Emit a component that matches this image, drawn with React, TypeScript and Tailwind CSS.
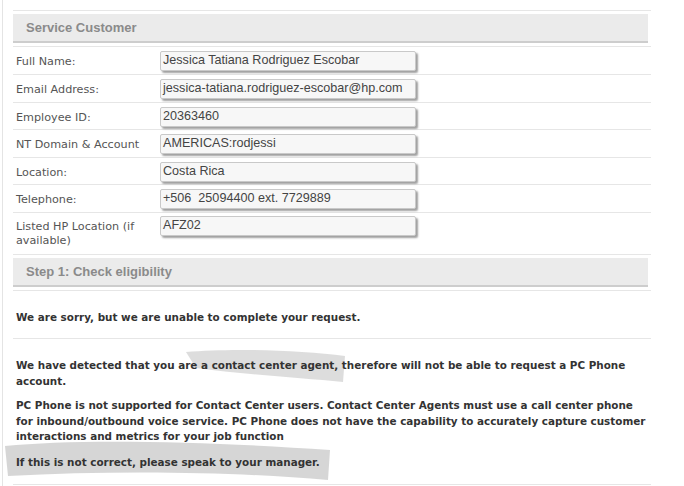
import React from 'react';

const LABEL = "font-['DejaVu_Sans',Verdana,sans-serif] text-[11.2px] text-[#555]";
const INPUT =
  "w-[256px] h-[20px] rounded-[2px] border border-[#c9c9c9] bg-[#f7f7f7] px-[2px] leading-[16px] whitespace-pre text-[12.6px] text-[#444] font-['Liberation_Sans',Arial,sans-serif] shadow-[2px_2px_2px_#a0a0a0]";

const fields = [
  { label: 'Full Name:', value: 'Jessica Tatiana Rodriguez Escobar', h: 'h-[28px]' },
  { label: 'Email Address:', value: 'jessica-tatiana.rodriguez-escobar@hp.com', h: 'h-[28px]' },
  { label: 'Employee ID:', value: '20363460', h: 'h-[27px]' },
  { label: 'NT Domain & Account', value: 'AMERICAS:rodjessi', h: 'h-[28px]' },
  { label: 'Location:', value: 'Costa Rica', h: 'h-[27px]' },
  { label: 'Telephone:', value: '+506  25094400 ext. 7729889', h: 'h-[28px]' },
];

const SectionHeader: React.FC<{ title: string }> = ({ title }) => (
  <div className="border-t border-[#e6e6e6] pt-[3px] pb-[3px]">
    <div className="h-[29px] mr-[3px] bg-[#ebebeb] border-b-2 border-[#cdcdcd] pl-[13px] pt-[1px] flex items-center font-bold text-[#8a8a8a] font-['Liberation_Sans',Arial,sans-serif] text-[13px]">
      {title}
    </div>
  </div>
);

export default function App() {
  return (
    <div className="relative w-[684px] h-[486px] overflow-hidden bg-white">
      {/* highlighter strokes */}
      <svg className="absolute left-0 top-0 pointer-events-none" width="684" height="486">
        <path d="M186 352 C230 348 300 350 345 356 L343 382 C300 378 240 374 196 368 Z" fill="#d4d4d4" opacity="0.8" />
        <path d="M5 446 C80 438 220 442 330 450 L328 480 C240 472 120 470 8 476 Z" fill="#cfcfcf" opacity="0.85" />
      </svg>

      <div className="relative ml-[2px] h-full border-l border-[#e4e4e4] pl-[10px] pt-[10px]">
        <div className="w-[638px]">
          <SectionHeader title="Service Customer" />

          {fields.map((f) => (
            <div key={f.label} className={`border-t border-[#e6e6e6] flex items-start ${f.h}`}>
              <div className={`w-[147px] pl-[3px] pt-[7px] ${LABEL}`}>{f.label}</div>
              <div className="pt-[4px]">
                <div className={INPUT}>{f.value}</div>
              </div>
            </div>
          ))}

          <div className="border-t border-[#e6e6e6] flex items-start h-[42px]">
            <div className={`w-[147px] pl-[3px] pt-[7px] leading-[14px] ${LABEL}`}>
              Listed HP Location (if available)
            </div>
            <div className="pt-[3px]">
              <div className={INPUT}>AFZ02</div>
            </div>
          </div>

          <SectionHeader title="Step 1: Check eligibility" />

          <div className="border-t border-[#e6e6e6] h-[48px] pl-[3px] pt-[19px] font-['DejaVu_Sans',Verdana,sans-serif] text-[10.4px] font-bold text-[#333]">
            We are sorry, but we are unable to complete your request.
          </div>

          <div className="border-t border-[#e6e6e6] h-[146px] pl-[3px] pt-[18px] font-['DejaVu_Sans',Verdana,sans-serif] text-[10.4px] font-bold text-[#333] leading-[16px]">
            <p>We have detected that you are a contact center agent, therefore will not be able to request a PC Phone account.</p>
            <p className="mt-[9px] leading-[15.5px]">
              PC Phone is not supported for Contact Center users. Contact Center Agents must use a call center phone for inbound/outbound voice service. PC Phone does not have the capability to accurately capture customer interactions and metrics for your job function
            </p>
            <p className="mt-[9px]">If this is not correct, please speak to your manager.</p>
          </div>
          <div className="border-t border-[#e6e6e6]" />
        </div>
      </div>
    </div>
  );
}
